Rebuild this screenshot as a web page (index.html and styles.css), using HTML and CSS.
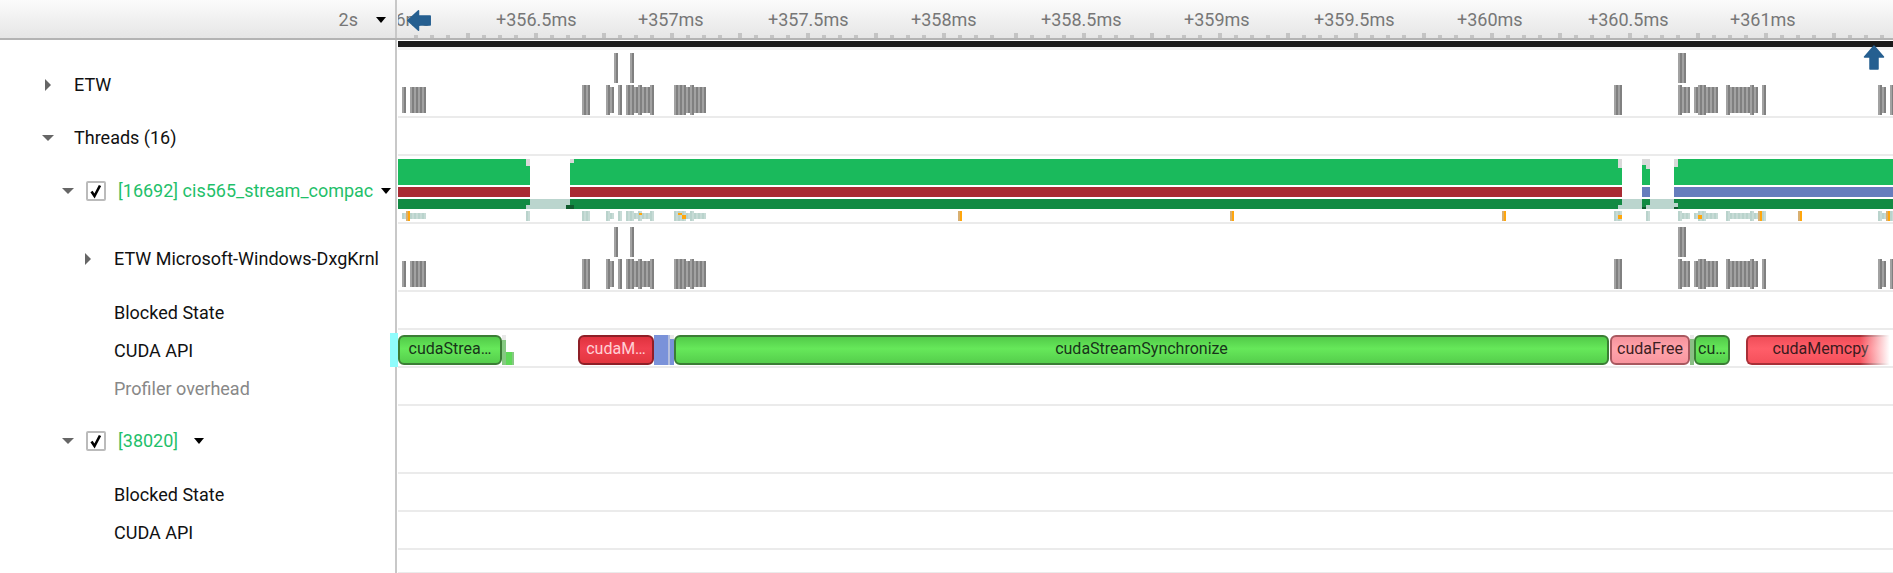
FILE: index.html
```html
<!DOCTYPE html>
<html lang="en">

<head>
    <meta charset="UTF-8">
    <title>Trace timeline</title>
    <link rel="stylesheet" href="styles.css">
</head>

<body>
    <!-- shared shapes for the track drawings -->
    <svg class="defs" width="0" height="0">
        <defs>
            <pattern id="greyStripe" width="4" height="4" patternUnits="userSpaceOnUse">
                <rect width="2" height="4" fill="#a2a2a2"></rect>
                <rect x="2" width="2" height="4" fill="#808080"></rect>
            </pattern>
            <pattern id="paleStripe" width="4" height="4" patternUnits="userSpaceOnUse">
                <rect width="2" height="4" fill="#b9d3cc"></rect>
                <rect x="2" width="2" height="4" fill="#c7dbd6"></rect>
            </pattern>
            <g id="tickGroup">
                <rect y="33" width="4" height="5"></rect>
                <rect x="16" y="35" width="4" height="3"></rect>
                <rect x="32" y="35" width="4" height="3"></rect>
                <rect x="48" y="35" width="4" height="3"></rect>
            </g>
            <g id="etwBars" fill="url(#greyStripe)">
                <path d="M216 3h4v30h-4zM232 3h4v30h-4zM1280 3h8v30h-8z"></path>
                <path d="M184 35h8v30h-8zM208 35h4v30h-4zM220 35h4v30h-4zM228 35h8v30h-8zM240 35h4v30h-4zM252 35h4v30h-4zM276 35h12v30h-12zM292 35h4v30h-4zM1216 35h8v30h-8zM1280 35h4v30h-4zM1300 35h8v30h-8zM1328 35h4v30h-4zM1352 35h4v30h-4zM1364 35h4v30h-4zM1480 35h4v30h-4zM1492 35h4v30h-4z"></path>
                <path d="M4 37h4v26h-4zM12 37h16v26h-16zM212 37h4v26h-4zM236 37h4v26h-4zM244 37h8v26h-8zM288 37h4v26h-4zM296 37h12v26h-12zM1284 37h8v26h-8zM1296 37h4v26h-4zM1308 37h12v26h-12zM1332 37h20v26h-20zM1356 37h4v26h-4zM1484 37h4v26h-4z"></path>
            </g>
        </defs>
    </svg>

    <header class="topbar">
        <div class="label scale">
            <span class="scale-value">2s</span>
            <span class="drop"></span>
        </div>
        <div class="ruler">
            <svg class="ticks" width="1495" height="38" fill="#c4c4c4">
                <rect x="16" y="35" width="4" height="3"></rect>
                <rect x="32" y="35" width="4" height="3"></rect>
                <rect x="48" y="35" width="4" height="3"></rect>
                <use href="#tickGroup" x="68"></use>
                <use href="#tickGroup" x="136"></use>
                <use href="#tickGroup" x="204"></use>
                <use href="#tickGroup" x="272"></use>
                <use href="#tickGroup" x="340"></use>
                <use href="#tickGroup" x="408"></use>
                <use href="#tickGroup" x="476"></use>
                <use href="#tickGroup" x="544"></use>
                <use href="#tickGroup" x="616"></use>
                <use href="#tickGroup" x="684"></use>
                <use href="#tickGroup" x="752"></use>
                <use href="#tickGroup" x="820"></use>
                <use href="#tickGroup" x="888"></use>
                <use href="#tickGroup" x="956"></use>
                <use href="#tickGroup" x="1024"></use>
                <use href="#tickGroup" x="1092"></use>
                <use href="#tickGroup" x="1160"></use>
                <use href="#tickGroup" x="1230"></use>
                <use href="#tickGroup" x="1298"></use>
                <use href="#tickGroup" x="1366"></use>
                <use href="#tickGroup" x="1434"></use>
            </svg>
            <span class="time" style="left: -33px">+356ms</span>
            <span class="time" style="left: 98px">+356.5ms</span>
            <span class="time" style="left: 240px">+357ms</span>
            <span class="time" style="left: 370px">+357.5ms</span>
            <span class="time" style="left: 513px">+358ms</span>
            <span class="time" style="left: 643px">+358.5ms</span>
            <span class="time" style="left: 786px">+359ms</span>
            <span class="time" style="left: 916px">+359.5ms</span>
            <span class="time" style="left: 1059px">+360ms</span>
            <span class="time" style="left: 1190px">+360.5ms</span>
            <span class="time" style="left: 1332px">+361ms</span>
        </div>
    </header>

    <div class="row overview-row">
        <div class="label"></div>
        <div class="track"><div class="overview"></div></div>
    </div>

    <div class="row tall">
        <div class="label">
            <span class="twist twist-0"><span class="tri-right"></span></span>
            <span class="name">ETW</span>
        </div>
        <div class="track">
            <svg class="draw" width="1495" height="66"><use href="#etwBars"></use></svg>
        </div>
    </div>

    <div class="row">
        <div class="label">
            <span class="twist twist-0"><span class="tri-down"></span></span>
            <span class="name">Threads (16)</span>
        </div>
        <div class="track"></div>
    </div>

    <div class="row tall">
        <div class="label">
            <span class="twist twist-1"><span class="tri-down"></span></span>
            <span class="check">
                <svg width="16" height="16" viewBox="0 0 16 16"><path d="M3.5 8.5 6.5 13 12 2.5" fill="none" stroke="#000" stroke-width="2.6"></path></svg>
            </span>
            <span class="thread-name">[16692] cis565_stream_compac</span>
            <span class="drop"></span>
        </div>
        <div class="track">
            <svg class="draw" width="1495" height="66">
                <path fill="#1aba5c" d="M0 3h132v26h-132zM172 3h1052v26h-1052zM1244 3h8v26h-8zM1276 3h219v26h-219z"></path>
                <path fill="#d9d9d9" d="M128 3h4v7h-4zM172 3h4v4h-4zM1220 3h4v9h-4zM1244 3h4v6h-4zM1248 3h4v10h-4zM1276 3h4v8h-4z"></path>
                <path fill="#a92b33" d="M0 31h132v10h-132zM172 31h1052v10h-1052z"></path>
                <path fill="#667dbd" d="M1244 31h8v10h-8zM1276 31h219v10h-219z"></path>
                <path fill="#128a43" d="M0 43h132v10h-132zM172 43h1052v10h-1052zM1244 43h8v10h-8zM1276 43h219v10h-219z"></path>
                <path fill="#bbd5ce" d="M132 43h40v10h-40zM128 49h4v4h-4zM1224 43h20v10h-20zM1220 49h4v4h-4zM1252 43h24v10h-24zM1248 49h4v4h-4zM1276 47h4v4h-4z"></path>
                <path fill="#0f5c2e" d="M168 49h8v4h-8zM1244 51h4v2h-4zM1276 51h4v2h-4z"></path>
                <path fill="url(#paleStripe)" d="M128 55h4v10h-4zM184 55h8v10h-8zM208 55h4v10h-4zM220 55h4v10h-4zM228 55h8v10h-8zM240 55h4v10h-4zM252 55h4v10h-4zM276 55h12v10h-12zM292 55h4v10h-4zM1216 55h8v10h-8zM1248 55h4v10h-4zM1280 55h4v10h-4zM1300 55h8v10h-8zM1328 55h4v10h-4zM1352 55h4v10h-4zM1364 55h4v10h-4zM1480 55h4v10h-4zM1492 55h4v10h-4z"></path>
                <path fill="url(#paleStripe)" d="M4 57h24v6h-24zM212 57h4v6h-4zM236 57h4v6h-4zM244 57h8v6h-8zM288 57h4v6h-4zM296 57h12v6h-12zM1284 57h8v6h-8zM1296 57h4v6h-4zM1308 57h12v6h-12zM1332 57h20v6h-20zM1356 57h4v6h-4zM1484 57h4v6h-4z"></path>
                <path fill="#d9b071" d="M8 55h2v10h-2zM560 55h2v10h-2zM832 55h2v10h-2zM1104 55h2v10h-2zM1360 55h2v10h-2zM1400 55h2v10h-2zM1488 55h2v10h-2z"></path>
                <path fill="#ffa60d" d="M10 55h2v10h-2zM562 55h2v10h-2zM834 55h2v10h-2zM1106 55h2v10h-2zM1362 55h2v10h-2zM1402 55h2v10h-2zM1490 55h2v10h-2zM241 57h3v2h-3zM280 57h4v2h-4zM284 59h4v4h-4zM1220 59h4v4h-4zM1300 59h4v4h-4z"></path>
            </svg>
        </div>
    </div>

    <div class="row tall">
        <div class="label">
            <span class="twist twist-2"><span class="tri-right"></span></span>
            <span class="name">ETW Microsoft-Windows-DxgKrnl</span>
        </div>
        <div class="track">
            <svg class="draw" width="1495" height="66"><use href="#etwBars"></use></svg>
        </div>
    </div>

    <div class="row">
        <div class="label plain"><span class="name">Blocked State</span></div>
        <div class="track"></div>
    </div>

    <div class="row">
        <div class="selected-mark"></div>
        <div class="label plain"><span class="name">CUDA API</span></div>
        <div class="track">
            <div class="slice green" style="left: 0; width: 104px">cudaStrea…</div>
            <svg class="draw" width="1495" height="36">
                <path fill="#e8e8e8" d="M104 5h4v5h-4zM272 5h4v4h-4zM1292 5h4v4h-4z"></path>
                <path fill="#86c982" d="M104 10h4v25h-4zM108 22h8v13h-8z"></path>
                <path fill="#5fd958" d="M108 22h6v13h-6z"></path>
                <path fill="#7a92d9" d="M256 5h14v30h-14zM272 9h4v26h-4z"></path>
                <path fill="#b5bfdd" d="M270 5h2v30h-2z"></path>
                <path fill="#8abf85" d="M1292 9h4v26h-4z"></path>
            </svg>
            <div class="slice red" style="left: 180px; width: 76px">cudaM…</div>
            <div class="slice green" style="left: 276px; width: 935px">cudaStreamSynchronize</div>
            <div class="slice pink" style="left: 1212px; width: 80px">cudaFree</div>
            <div class="slice green" style="left: 1296px; width: 36px">cu…</div>
            <div class="slice coral" style="left: 1348px; width: 147px">cudaMemcpy</div>
            <div class="fade"></div>
        </div>
    </div>

    <div class="row">
        <div class="label plain"><span class="name muted">Profiler overhead</span></div>
        <div class="track"></div>
    </div>

    <div class="row tall">
        <div class="label">
            <span class="twist twist-1"><span class="tri-down"></span></span>
            <span class="check">
                <svg width="16" height="16" viewBox="0 0 16 16"><path d="M3.5 8.5 6.5 13 12 2.5" fill="none" stroke="#000" stroke-width="2.6"></path></svg>
            </span>
            <span class="thread-name">[38020]</span>
            <span class="drop drop-far"></span>
        </div>
        <div class="track"></div>
    </div>

    <div class="row">
        <div class="label plain"><span class="name">Blocked State</span></div>
        <div class="track"></div>
    </div>

    <div class="row">
        <div class="label plain"><span class="name">CUDA API</span></div>
        <div class="track"></div>
    </div>

    <div class="row last">
        <div class="label"></div>
        <div class="track"></div>
    </div>

    <!-- range handles sit over the ruler and first track -->
    <svg class="handle handle-left" width="24" height="21" viewBox="0 0 24 21">
        <path d="M0.8 10.5 11.5 0.8V6H23.2V15H11.5V20.2Z"></path>
    </svg>
    <svg class="handle handle-up" width="22" height="25" viewBox="0 0 22 25">
        <path d="M11 1 20.5 12H15V24H7V12H1.5Z"></path>
    </svg>
</body>

</html>
```

FILE: styles.css
```css
body {
    margin: 0;
    height: 573px;
    overflow: hidden;
    position: relative;
    background-color: #fff;
    font-family: Roboto, sans-serif;
    font-size: 18px;
    color: #111;
}

.defs {
    position: absolute;
}

.topbar {
    display: flex;
    height: 40px;
    box-sizing: border-box;
    border-bottom: 2px solid #b4b4b4;
    background: linear-gradient(#fbfbfb, #e6e6e6);
}

.scale {
    justify-content: flex-end;
    padding-right: 9px;
    color: #777;
}

.scale-value {
    margin-right: 18px;
}

.ruler {
    flex: 1;
    position: relative;
    overflow: hidden;
}

.ticks {
    position: absolute;
    left: 0;
    top: 0;
}

.time {
    position: absolute;
    top: 10px;
    line-height: 20px;
    white-space: nowrap;
    color: #777;
}

.row {
    display: flex;
    height: 38px;
    position: relative;
}

.row.tall {
    height: 68px;
}

.row.overview-row {
    height: 10px;
}

.row.last {
    height: 23px;
}

.row.last .track {
    border-bottom-width: 1px;
}

.label {
    width: 397px;
    flex: none;
    display: flex;
    align-items: center;
    box-sizing: border-box;
    border-right: 2px solid #c8c8c8;
    margin-right: 1px;
    padding-top: 1px;
}

.label.plain {
    padding-left: 114px;
    padding-top: 3px;
}

.track {
    flex: 1;
    position: relative;
    border-bottom: 2px solid #ebebeb;
    overflow: hidden;
}

.overview {
    margin-top: 1px;
    height: 6px;
    background-color: #1a1a1a;
}

.overview-row .track {
    border-bottom: 3px solid #f2f2f2;
}

.draw {
    position: absolute;
    left: 0;
    top: 0;
}

.twist {
    width: 12px;
    flex: none;
    display: flex;
    justify-content: center;
    margin-right: 20px;
}

.twist-0 {
    margin-left: 42px;
}

.twist-1 {
    margin-left: 62px;
    margin-right: 12px;
}

.twist-2 {
    margin-left: 82px;
}

.tri-right {
    border-left: 6px solid #666;
    border-top: 6px solid transparent;
    border-bottom: 6px solid transparent;
}

.tri-down {
    border-top: 6px solid #666;
    border-left: 6px solid transparent;
    border-right: 6px solid transparent;
}

.drop {
    border-top: 6px solid #000;
    border-left: 5px solid transparent;
    border-right: 5px solid transparent;
    margin-left: 8px;
}

.scale .drop {
    margin-left: 0;
}

.drop-far {
    margin-left: 16px;
}

.name {
    white-space: nowrap;
}

.muted {
    color: #888;
}

.check {
    width: 20px;
    height: 20px;
    flex: none;
    box-sizing: border-box;
    border: 2px solid #bbb;
    border-radius: 2px;
    margin-right: 12px;
}

.check svg {
    display: block;
}

.thread-name {
    color: #1fc06a;
    white-space: nowrap;
}

.slice {
    position: absolute;
    top: 5px;
    height: 30px;
    box-sizing: border-box;
    border: 2px solid;
    border-radius: 6px;
    font-size: 16px;
    line-height: 23px;
    text-align: center;
    white-space: nowrap;
    overflow: hidden;
}

.green {
    border-color: #3b7d35;
    color: #18341a;
    background: linear-gradient(#52cb49, #66e85a 45%, #55ce4c);
}

.red {
    border-color: #8e1f27;
    color: #ffd0d4;
    background: linear-gradient(#e0333f, #f0404f 45%, #e3363f);
}

.pink {
    border-color: #a8585f;
    color: #3c2022;
    background: linear-gradient(#f5929b, #ffa4ac 45%, #f8959e);
}

.coral {
    border-color: #a82f37;
    border-right: none;
    border-radius: 6px 0 0 6px;
    color: #3b1a1d;
    background: linear-gradient(#f04e59, #ff5e69 45%, #f5505b);
}

.fade {
    position: absolute;
    right: 0;
    top: 4px;
    width: 33px;
    height: 32px;
    background: linear-gradient(to right, rgba(255, 255, 255, 0), #fff 90%);
}

.selected-mark {
    position: absolute;
    left: 390px;
    top: 3px;
    width: 8px;
    height: 34px;
    background-color: #8ffcfc;
    z-index: 1;
}

.handle {
    position: absolute;
    fill: #255f90;
    stroke: #255f90;
    stroke-width: 1.5;
    stroke-linejoin: round;
    overflow: visible;
}

.handle-left {
    left: 407px;
    top: 10px;
}

.handle-up {
    left: 1863px;
    top: 45px;
}
```
